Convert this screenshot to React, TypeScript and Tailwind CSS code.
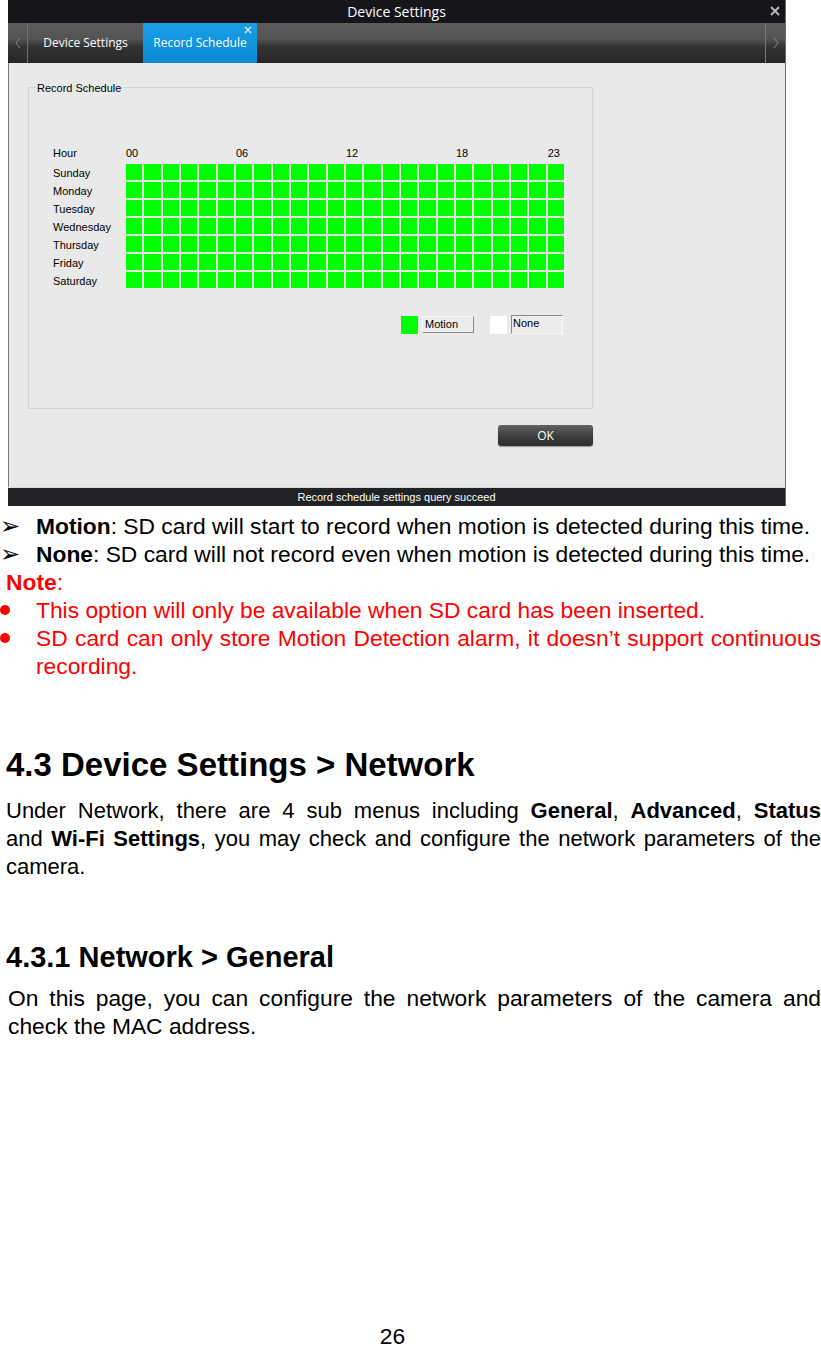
import React from "react";

const days = ["Sunday", "Monday", "Tuesday", "Wednesday", "Thursday", "Friday", "Saturday"];
const hours = Array.from({ length: 24 }, (_, i) => i);

function Chevron({ dir }: { dir: "l" | "r" }) {
  return (
    <svg width="6" height="12" viewBox="0 0 6 12" fill="none">
      {dir === "l" ? (
        <polyline points="5,1 1,6 5,11" stroke="#8a8a8a" strokeWidth="1" />
      ) : (
        <polyline points="1,1 5,6 1,11" stroke="#8a8a8a" strokeWidth="1" />
      )}
    </svg>
  );
}

function DeviceWindow() {
  return (
    <div className="ml-[8px] w-[778px] border-r border-[#6b6b6b] font-['Open_Sans',sans-serif]">
      {/* title bar */}
      <div className="relative h-[23px] bg-[#16161a] flex items-center justify-center">
        <span className="text-white text-[14px] leading-none">Device Settings</span>
        <div className="absolute right-[4px] top-[5px]">
          <svg width="12" height="12" viewBox="0 0 12 12">
            <path d="M2 2 L10 10 M10 2 L2 10" stroke="#b5b5b5" strokeWidth="2" />
          </svg>
        </div>
      </div>
      {/* tab bar */}
      <div className="flex h-[40px] bg-[linear-gradient(to_bottom,#5c5c5c_0%,#535353_40%,#343434_58%,#262626_100%)]">
        <div className="w-[20px] flex items-center justify-center border-r border-[#707070]">
          <Chevron dir="l" />
        </div>
        <div className="w-[115px] flex items-center justify-center text-white text-[12px]">Device Settings</div>
        <div className="relative w-[114px] flex items-center justify-center text-white text-[12px] bg-[linear-gradient(to_bottom,#1b9fe6,#0b88d2)]">
          Record Schedule
          <div className="absolute right-[5px] top-[3px]">
            <svg width="8" height="8" viewBox="0 0 8 8">
              <path d="M1 1 L7 7 M7 1 L1 7" stroke="#dff1fb" strokeWidth="1.1" />
            </svg>
          </div>
        </div>
        <div className="ml-auto w-[20px] flex items-center justify-center border-l border-[#7a7a7a]">
          <Chevron dir="r" />
        </div>
      </div>
      {/* content */}
      <div className="h-[424px] bg-[#e9e9e9] border-l border-[#7a7a7a] pt-[24px] font-['Liberation_Sans',Arial,sans-serif] text-[11px] text-black">
        <div className="relative ml-[19px] w-[565px] h-[322px] border border-[#d5d5d5]">
          <div className="absolute -top-[6px] left-[7px] bg-[#e9e9e9] leading-[13px] px-[1px]">Record Schedule</div>
          <div className="flex ml-[24px] mt-[58px]">
            <div className="w-[73px] flex flex-col">
              <div className="h-[14px] leading-[14px] mb-[4px]">Hour</div>
              {days.map((d) => (
                <div key={d} className="h-[18px] leading-[18px]">
                  {d}
                </div>
              ))}
            </div>
            <div className="w-[438px]">
              <div className="grid grid-cols-[repeat(24,1fr)] gap-[2px] h-[14px] leading-[14px] mb-[4px]">
                {hours.map((h) => (
                  <div key={h} className="whitespace-nowrap">
                    {h === 0 ? "00" : h === 6 ? "06" : h === 12 ? "12" : h === 18 ? "18" : h === 23 ? "23" : ""}
                  </div>
                ))}
              </div>
              <div className="grid grid-cols-[repeat(24,1fr)] gap-[2px]">
                {days.map((d) =>
                  hours.map((h) => <div key={d + h} className="h-[16px] bg-[#00ff00]" />)
                )}
              </div>
            </div>
          </div>
          <div className="flex justify-end items-center mt-[25px] mr-[29px]">
            <div className="w-[17px] h-[18px] bg-[#00ff00]" />
            <div className="ml-[4px] w-[52px] h-[17px] bg-[#ececec] border border-t-[#f8f8f8] border-l-[#f8f8f8] border-r-[#8a8a8a] border-b-[#8a8a8a] leading-[15px] pl-[2px]">
              Motion
            </div>
            <div className="ml-[16px] w-[17px] h-[18px] bg-white" />
            <div className="ml-[4px] w-[52px] h-[19px] bg-[#ececec] border border-t-[#8a8a8a] border-l-[#8a8a8a] border-r-[#fafafa] border-b-[#fafafa] leading-[14px] pl-[1px]">
              None
            </div>
          </div>
        </div>
        <div className="ml-[489px] mt-[16px] w-[95px] h-[21px] rounded-[3px] bg-[linear-gradient(to_bottom,#626262,#3a3a3a_60%,#2e2e2e)] shadow-[0_1px_1px_rgba(0,0,0,0.35)] flex items-center justify-center text-white text-[12px] font-['Open_Sans',sans-serif]">
          OK
        </div>
      </div>
      {/* status bar */}
      <div className="h-[19px] bg-[#212225] border-t border-[#d8d8d8] flex items-center justify-center text-white text-[11px] font-['Liberation_Sans_Narrow','Liberation_Sans',sans-serif]">
        Record schedule settings query succeed
      </div>
    </div>
  );
}

function Arrow() {
  return (
    <span className="inline-block w-[36px] font-['DejaVu_Sans',sans-serif] text-[24px] leading-[28px]">➢</span>
  );
}

function RedDot() {
  return (
    <span className="inline-flex w-[36px] h-[28px] items-center shrink-0">
      <span className="w-[10px] h-[10px] rounded-full bg-[#ff0000]" />
    </span>
  );
}

function JLine({ children, className = "" }: { children: React.ReactNode; className?: string }) {
  return <div className={"text-justify [text-align-last:justify] " + className}>{children}</div>;
}

export default function App() {
  return (
    <div className="w-[821px] h-[1348px] overflow-hidden bg-white text-black font-['Liberation_Sans',Arial,sans-serif] text-[22.8px] leading-[28px]">
      <DeviceWindow />
      <div className="mt-[6px]">
        <div className="flex">
          <Arrow />
          <span className="whitespace-nowrap">
            <b>Motion</b>: SD card will start to record when motion is detected during this time.
          </span>
        </div>
        <div className="flex">
          <Arrow />
          <span className="whitespace-nowrap">
            <b>None</b>: SD card will not record even when motion is detected during this time.
          </span>
        </div>
        <div className="pl-[6px] text-[#ff0000]">
          <b>Note</b>:
        </div>
        <div className="flex text-[#ff0000]">
          <RedDot />
          <span>This option will only be available when SD card has been inserted.</span>
        </div>
        <div className="flex text-[#ff0000]">
          <RedDot />
          <div className="w-[785px]">
            <JLine>SD card can only store Motion Detection alarm, it doesn’t support continuous</JLine>
            <div>recording.</div>
          </div>
        </div>
      </div>
      <h1 className="mt-[65px] ml-[6px] text-[33px] leading-[40px] font-bold">4.3 Device Settings &gt; Network</h1>
      <div className="mt-[12px] ml-[6px] w-[815px] text-[22px]">
        <JLine>
          Under Network, there are 4 sub menus including <b>General</b>, <b>Advanced</b>, <b>Status</b>
        </JLine>
        <JLine>
          and <b>Wi-Fi Settings</b>, you may check and configure the network parameters of the
        </JLine>
        <div>camera.</div>
      </div>
      <h2 className="mt-[58px] ml-[6px] text-[29px] leading-[36px] font-bold">4.3.1 Network &gt; General</h2>
      <div className="mt-[9px] ml-[8px] w-[813px]">
        <JLine>On this page, you can configure the network parameters of the camera and</JLine>
        <div>check the MAC address.</div>
      </div>
      <div className="mt-[283px] text-center pr-[36px] leading-[26px]">26</div>
    </div>
  );
}
